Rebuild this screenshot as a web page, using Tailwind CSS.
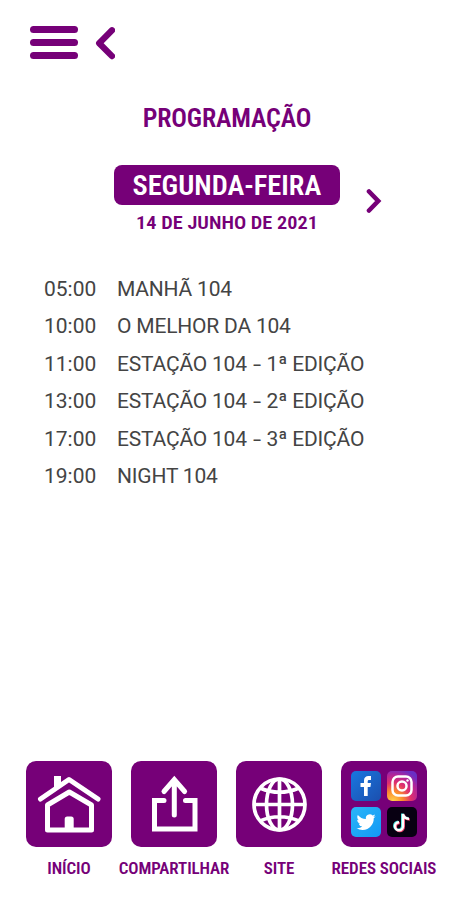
<!DOCTYPE html>
<html lang="pt-BR">
<head>
    <meta charset="UTF-8">
    <meta name="viewport" content="width=device-width, initial-scale=1.0">
    <title>Programação</title>
    <script src="https://cdn.jsdelivr.net/npm/@tailwindcss/browser@4"></script>
</head>
<body class="bg-white">
    <div class="w-[454px] h-[900px] flex flex-col overflow-hidden font-['Roboto',sans-serif] text-[#760078] whitespace-nowrap">
        <!-- Topo -->
        <header class="flex items-start pt-[26px] pl-[30px] gap-[17px] h-[100px] shrink-0">
            <button aria-label="Menu" class="flex flex-col gap-[6px]">
                <span class="w-12 h-[7px] rounded-full bg-[#760078]"></span>
                <span class="w-12 h-[7px] rounded-full bg-[#760078]"></span>
                <span class="w-12 h-[7px] rounded-full bg-[#760078]"></span>
            </button>
            <button aria-label="Voltar">
                <svg class="w-5 h-[34px]" viewBox="0 0 20 34" fill="none" stroke="currentColor" stroke-width="6.300" stroke-linecap="round" stroke-linejoin="round"><path d="M17 4.300 4.200 17.200l12.800 12.900"/></svg>
            </button>
        </header>

        <!-- Título e dia -->
        <h1 class="h-9 flex justify-center items-center text-[26px] font-semibold font-stretch-75% tracking-[-0.150px]"><span>PROGRAMAÇÃO</span></h1>
        <section class="mt-[29px] pl-[114px] flex items-start h-[100px]">
            <div class="w-[226px] flex flex-col items-center">
                <div class="w-full h-10 rounded-lg bg-[#760078] text-white flex justify-center items-center text-[27px] font-semibold font-stretch-75% pt-[2px]"><span class="scale-x-105">SEGUNDA-FEIRA</span></div>
                <p class="h-9 flex items-center text-[19px] font-semibold font-stretch-75%"><span class="scale-x-107">14 DE JUNHO DE 2021</span></p>
            </div>
            <button aria-label="Próximo dia" class="mt-[23px] ml-[26px]">
                <svg class="w-4 h-[26px]" viewBox="0 0 16 26" fill="none" stroke="currentColor" stroke-width="4.600" stroke-linecap="round" stroke-linejoin="miter"><path d="m3 3.500 9.200 9.500L3 22.500"/></svg>
            </button>
        </section>

        <!-- Grade de horários -->
        <ul class="pl-11 mt-[6px] text-[21px] text-[#444] leading-[37.400px]">
            <li class="flex"><span class="w-[73px]">05:00</span><span class="tracking-[-0.200px]">MANHÃ 104</span></li>
            <li class="flex"><span class="w-[73px]">10:00</span><span class="tracking-[-0.200px]">O MELHOR DA 104</span></li>
            <li class="flex"><span class="w-[73px]">11:00</span><span class="tracking-[-0.200px]">ESTAÇÃO 104 <span class="inline-block mx-[2px] scale-x-140">-</span> 1ª EDIÇÃO</span></li>
            <li class="flex"><span class="w-[73px]">13:00</span><span class="tracking-[-0.200px]">ESTAÇÃO 104 <span class="inline-block mx-[2px] scale-x-140">-</span> 2ª EDIÇÃO</span></li>
            <li class="flex"><span class="w-[73px]">17:00</span><span class="tracking-[-0.200px]">ESTAÇÃO 104 <span class="inline-block mx-[2px] scale-x-140">-</span> 3ª EDIÇÃO</span></li>
            <li class="flex"><span class="w-[73px]">19:00</span><span class="tracking-[-0.200px]">NIGHT 104</span></li>
        </ul>

        <!-- Menu inferior -->
        <nav class="mt-auto h-[139px] shrink-0 pl-[16.500px] grid grid-cols-[repeat(4,105px)] text-[17px] font-semibold font-stretch-75% tracking-[-0.100px]">
            <a class="flex flex-col items-center">
                <span class="size-[86px] rounded-[10px] bg-[#760078] text-white">
                    <svg viewBox="0 0 86 86" fill="none" stroke="currentColor" stroke-width="5" stroke-linecap="round" stroke-linejoin="round">
                        <path d="m14.500 38 28.500-19.500L72 38"/>
                        <path d="M28 28V15h7v8Z" fill="currentColor" stroke="none"/>
                        <path d="M21.500 44v25h44V44L43.300 31Z"/>
                        <path d="M38.700 69V58q0-2.500 2.500-2.500h4q2.500 0 2.500 2.500v11Z" fill="currentColor" stroke="none"/>
                    </svg>
                </span>
                <span class="h-11 flex items-center">INÍCIO</span>
            </a>
            <a class="flex flex-col items-center">
                <span class="size-[86px] rounded-[10px] bg-[#760078] text-white">
                    <svg viewBox="0 0 86 86" fill="none" stroke="currentColor" stroke-width="5" stroke-linecap="round">
                        <path d="M43.300 54V19M33 30.500l10.300-12 10.300 12M33 39.500h-9.500v28.500H64V39.500h-9.500"/>
                    </svg>
                </span>
                <span class="h-11 flex items-center">COMPARTILHAR</span>
            </a>
            <a class="flex flex-col items-center">
                <span class="size-[86px] rounded-[10px] bg-[#760078] text-white">
                    <svg viewBox="0 0 86 86" fill="none" stroke="currentColor" stroke-width="3.700">
                        <circle cx="43.500" cy="43.500" r="25.500"/>
                        <ellipse cx="43.500" cy="43.500" rx="13" ry="25.500"/>
                        <path d="M43.500 18v51M18 43.500h51M24 27q19.500 8.500 39 0M24 60q19.500-8.500 39 0"/>
                    </svg>
                </span>
                <span class="h-11 flex items-center">SITE</span>
            </a>
            <a class="flex flex-col items-center">
                <span class="size-[86px] rounded-[10px] bg-[#760078] text-white grid grid-cols-[30px_30px] gap-[6px] content-center justify-center">
                    <svg class="rounded-[5px] bg-linear-to-br from-[#1877e0] to-[#1b4fae]" viewBox="0 0 30 30"><path fill="#fff" d="M13 25v-9H9.500v-4H13V9.500C13 6.500 14.800 5 17.500 5H20v4h-1.800c-1.200 0-1.500.6-1.500 1.600V12H20l-.6 4h-2.700v9Z"/></svg>
                    <svg class="rounded-[5px]" viewBox="0 0 30 30" fill="none" stroke="#fff" stroke-width="2.500">
                        <defs>
                            <radialGradient id="ig" cx=".2" cy="1" r="1.100">
                                <stop offset="0" stop-color="#ffd14a"/>
                                <stop offset=".3" stop-color="#fb8a2e"/>
                                <stop offset=".55" stop-color="#e0306c"/>
                                <stop offset=".8" stop-color="#b0249a"/>
                                <stop offset="1" stop-color="#6a2fc4"/>
                            </radialGradient>
                        </defs>
                        <rect width="30" height="30" fill="url(#ig)" stroke="none"/>
                        <rect x="5.500" y="5.500" width="19" height="19" rx="5.500"/>
                        <circle cx="15" cy="15" r="4.500"/>
                        <circle cx="20.500" cy="9.500" r="1.200" fill="#fff" stroke="none"/>
                    </svg>
                    <svg class="rounded-[5px] bg-linear-to-br from-[#2bb5f8] to-[#1299f5]" viewBox="0 0 30 30"><path fill="#fff" transform="translate(5.500 5.500) scale(.8)" d="M23.950 4.570a10 10 0 0 1-2.820.770 4.960 4.960 0 0 0 2.160-2.720c-.95.550-2 .960-3.130 1.180a4.920 4.920 0 0 0-8.380 4.480C7.690 8.090 4.070 6.130 1.640 3.160a4.820 4.820 0 0 0-.67 2.480c0 1.700.87 3.200 2.190 4.080a4.900 4.900 0 0 1-2.230-.61v.06a4.920 4.920 0 0 0 3.950 4.830 5 5 0 0 1-2.210.08 4.940 4.940 0 0 0 4.600 3.420A9.870 9.870 0 0 1 0 19.540a14 14 0 0 0 7.550 2.210c9.050 0 14-7.500 14-13.980l-.01-.63a9.940 9.940 0 0 0 2.410-2.570Z"/></svg>
                    <svg class="rounded-[5px] bg-[#080012]" viewBox="0 0 30 30" fill="none" stroke-width="2.400">
                        <path stroke="#3fe0dc" d="M15.200 6.500v12.300a4 4 0 1 1-4-4M15.200 6.500q.8 4.500 6 4.800"/>
                        <path stroke="#f0406c" d="M16.800 7.700V20a4 4 0 1 1-4-4M16.800 7.700q.8 4.500 6 4.800"/>
                        <path stroke="#fff" d="M16 7v12.300a4 4 0 1 1-4-4M16 7q.8 4.500 6 4.800"/>
                    </svg>
                </span>
                <span class="h-11 flex items-center">REDES SOCIAIS</span>
            </a>
        </nav>
    </div>
</body>
</html>
